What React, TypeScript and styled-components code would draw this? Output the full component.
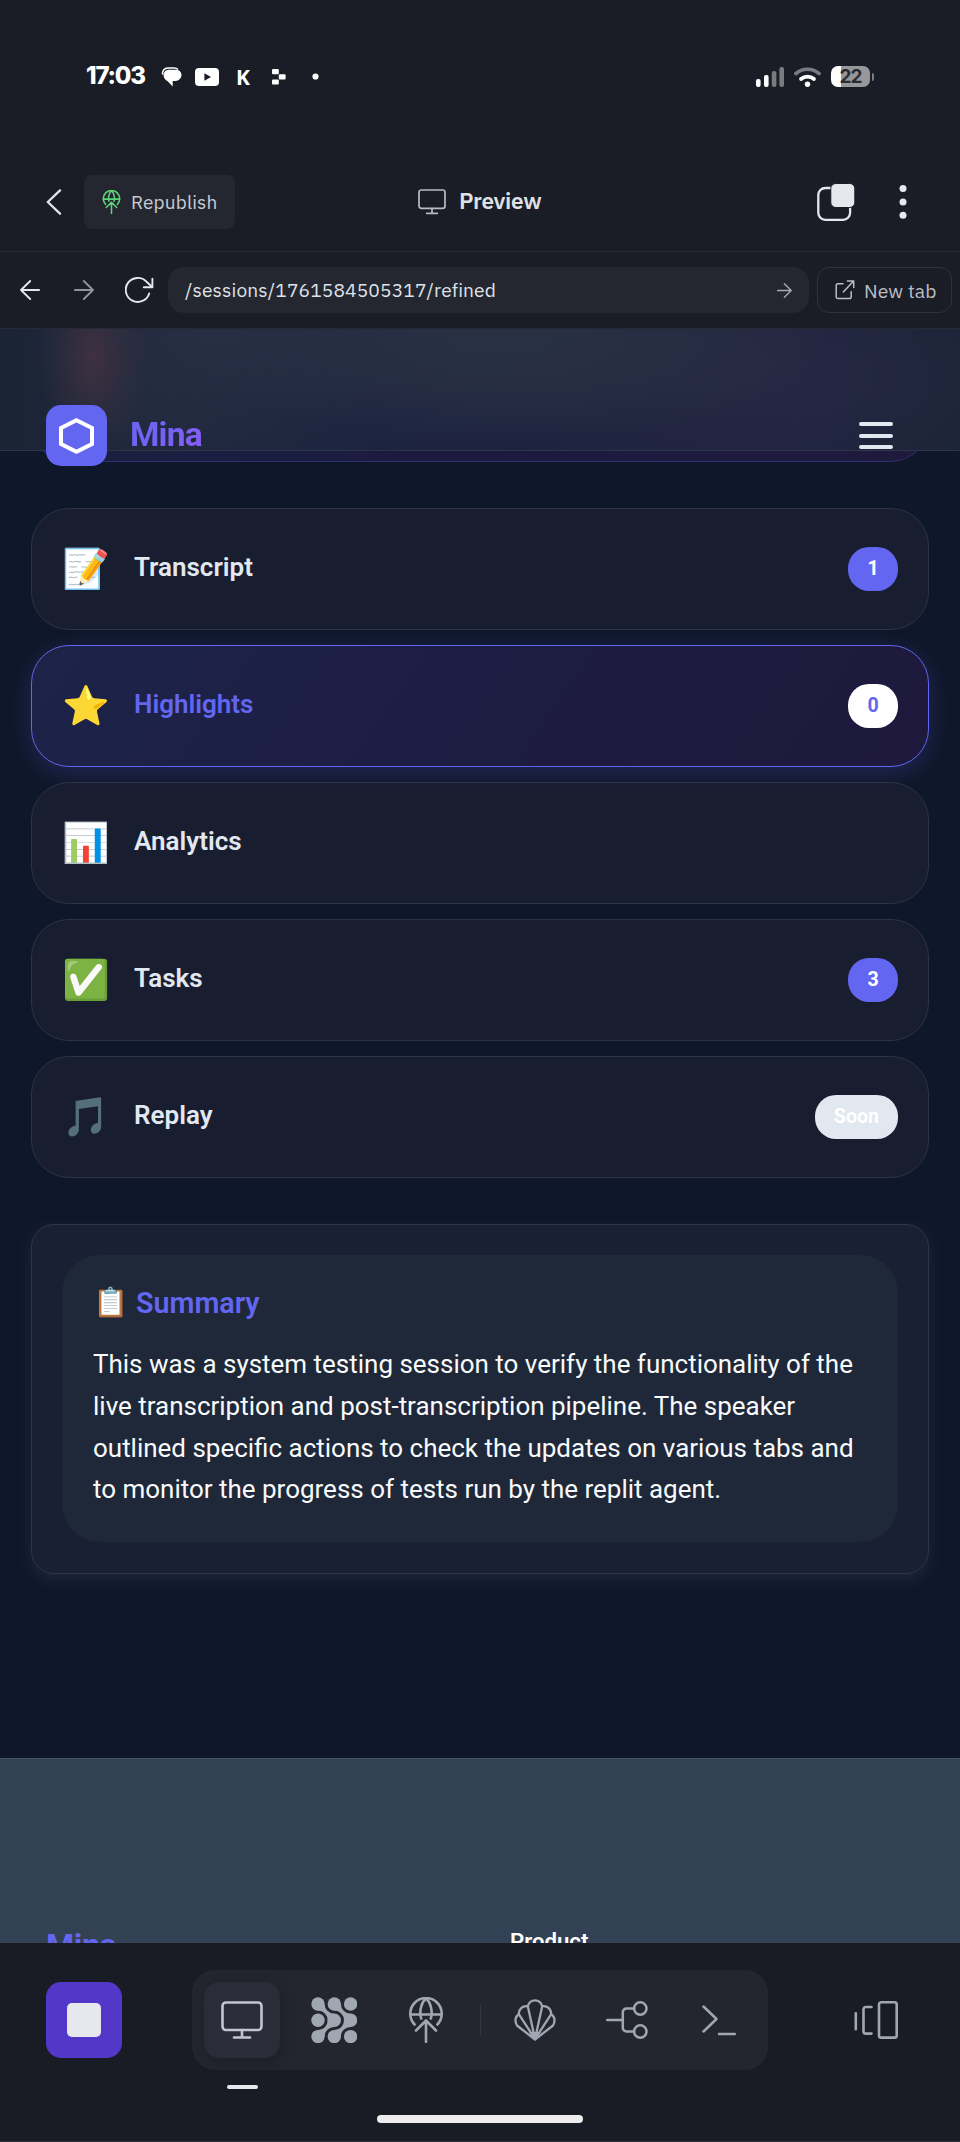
import React from 'react';
import styled, { createGlobalStyle, css } from 'styled-components';

const chromeFont = `'IBM Plex Sans', 'Noto Sans', sans-serif`;
const appFont = `Roboto, 'Noto Sans', 'Noto Color Emoji', sans-serif`;

const GlobalStyle = createGlobalStyle`
  * { box-sizing: border-box; }
  body { margin: 0; background: #1b1d26; }
  svg { display: block; flex: none; }
`;

const Screen = styled.div`
  width: 960px;
  height: 2142px;
  display: flex;
  flex-direction: column;
  overflow: hidden;
  background: #1b1d26;
  font-family: ${chromeFont};
`;

/* ---------- status bar ---------- */

const StatusBar = styled.div`
  height: 153px;
  flex: none;
  display: flex;
  align-items: center;
  justify-content: space-between;
  padding: 0 86px;
`;

const StatusSide = styled.div<{ $gap: number }>`
  display: flex;
  align-items: center;
  gap: ${(p) => p.$gap}px;
`;

const Clock = styled.span`
  width: 67px;
  font: 800 24px/28px Inter, sans-serif;
  letter-spacing: -1.2px;
  color: #fff;
  margin-top: -1px;
`;

const NoticeSlot = styled.span`
  width: 36px;
  display: flex;
  justify-content: center;
  color: #fff;
  font: 700 21px/22px 'Noto Sans', sans-serif;
`;

const Battery = styled.span`
  width: 39px;
  height: 21px;
  border-radius: 7px;
  background: linear-gradient(90deg, #fff 10px, #98989c 10px);
  color: #2a2b30;
  font: 700 19px/22px Inter, sans-serif;
  letter-spacing: -1px;
  text-align: center;
`;

const BatteryRow = styled.span`
  display: flex;
  align-items: center;
  gap: 2px;
`;

const BatteryNub = styled.span`
  width: 2px;
  height: 8px;
  border-radius: 0 2px 2px 0;
  background: #7c7d82;
`;

/* ---------- workspace bars ---------- */

const TopBar = styled.div`
  height: 99px;
  flex: none;
  display: grid;
  grid-template-columns: 1fr auto 1fr;
  align-items: center;
  padding: 0 53px 0 46px;
  border-bottom: 1px solid #262936;
`;

const TopLeft = styled.div`
  display: flex;
  align-items: center;
  gap: 22px;
`;

const TopRight = styled.div`
  display: flex;
  align-items: center;
  justify-content: flex-end;
  gap: 44px;
`;

const RepublishButton = styled.div`
  width: 151px;
  height: 54px;
  padding-left: 18px;
  border-radius: 8px;
  background: #242730;
  display: flex;
  align-items: center;
  gap: 10px;
  color: #c8cbd3;
  font-size: 19px;
  letter-spacing: 0.15px;
`;

const PreviewTitle = styled.div`
  display: flex;
  align-items: center;
  gap: 13px;
  width: 124px;
  margin-left: 7px;
  color: #dfe1e7;
  font-size: 22.6px;
  font-weight: 600;
  line-height: 30px;
  letter-spacing: -0.3px;
  white-space: nowrap;
`;

const PreviewLabel = styled.span`
  margin-top: -3px;
`;

const AddressBar = styled.div`
  height: 77px;
  flex: none;
  display: flex;
  align-items: center;
  padding: 0 8px 0 20px;
  border-bottom: 1px solid #272937;
`;

const NavButtons = styled.div`
  width: 148px;
  display: flex;
  align-items: center;
`;

const NavButton = styled.span<{ $space: number; $color: string }>`
  margin-right: ${(p) => p.$space}px;
  color: ${(p) => p.$color};
`;

const AddressField = styled.div`
  width: 641px;
  height: 46px;
  padding: 0 17px;
  border-radius: 16px;
  background: #242730;
  display: flex;
  align-items: center;
  justify-content: space-between;
  color: #dfe2e8;
  font-size: 19.2px;
  letter-spacing: 0.13px;
`;

const AddressText = styled.span`
  margin-top: -2px;
`;

const NewTabButton = styled.div`
  width: 135px;
  height: 46px;
  margin-left: 8px;
  padding-left: 17px;
  border: 1px solid #2e303e;
  border-radius: 12px;
  display: flex;
  align-items: center;
  gap: 9px;
  color: #bbbec7;
  font-size: 19.3px;
  letter-spacing: 0.1px;
  white-space: nowrap;
`;

/* ---------- previewed page ---------- */

const Viewport = styled.div`
  position: relative;
  height: 1614px;
  flex: none;
  overflow: hidden;
  background: #0f172a;
  font-family: ${appFont};
`;

const SiteHeader = styled.header`
  position: absolute;
  z-index: 2;
  top: 0;
  left: 0;
  width: 960px;
  height: 122px;
  padding: 76px 67px 0 46px;
  display: flex;
  align-items: flex-start;
  justify-content: space-between;
  border-bottom: 1px solid #2f3548;
  background:
    radial-gradient(54px 100px at 93px 28px, rgba(68, 50, 64, 0.85), rgba(62, 48, 64, 0.42) 52%, rgba(58, 46, 64, 0) 100%),
    radial-gradient(190px 150px at 210px 0px, rgba(40, 48, 70, 0.85), rgba(40, 48, 70, 0) 100%),
    radial-gradient(330px 105px at 500px 10px, rgba(41, 49, 68, 1), rgba(40, 48, 68, 0.75) 50%, rgba(40, 48, 68, 0) 100%),
    radial-gradient(280px 130px at 770px 48px, rgba(38, 40, 67, 1), rgba(38, 40, 67, 0) 100%),
    linear-gradient(90deg, #1a2435 0, #1f283b 130px, #1d2440 380px, #1e223b 780px, #1c233c 850px, #1b2437 875px);
`;

const Brand = styled.div`
  display: flex;
  align-items: center;
  gap: 23px;
`;

const BrandTile = styled.span`
  width: 61px;
  height: 61px;
  border-radius: 15px;
  background: #6366f1;
  display: flex;
  align-items: center;
  justify-content: center;
`;

const BrandName = styled.span`
  margin-top: -2px;
  font-size: 33.6px;
  font-weight: 700;
  letter-spacing: -0.8px;
  line-height: 44px;
  background: linear-gradient(135deg, #6366f1, #8b5cf6);
  background-clip: text;
  -webkit-background-clip: text;
  color: transparent;
`;

const MenuButton = styled.span`
  width: 34px;
  height: 27px;
  margin-top: 17px;
  display: flex;
  flex-direction: column;
  justify-content: space-between;
`;

const MenuBar = styled.span`
  height: 4px;
  border-radius: 2px;
  background: #e2e8f0;
`;

const Content = styled.main`
  padding: 0 31px;
`;

const ScrolledTab = styled.div`
  height: 133px;
  border: 1px solid #312f6b;
  border-top: 0;
  border-radius: 0 0 38px 38px;
  background: linear-gradient(100deg, #1a2040, #1b1b3f 45%, #1f1a3d);
`;

const TabList = styled.nav`
  display: flex;
  flex-direction: column;
  gap: 15px;
  margin-top: 46px;
`;

const Tab = styled.div<{ $active?: boolean }>`
  height: 122px;
  padding: 0 30px;
  border: 1px solid #2d3446;
  border-radius: 38px;
  background: rgba(30, 33, 52, 0.68);
  display: flex;
  align-items: center;
  color: #e2e8f0;
  ${(p) =>
    p.$active &&
    css`
      border-color: #6366f1;
      background: linear-gradient(125deg, #1c2448 0%, #1e1e45 42%, #1d1c40 60%, #1e193d 100%);
      box-shadow: 0 6px 24px rgba(99, 102, 241, 0.22);
      color: #6366f1;
    `}
`;

const TabEmoji = styled.span`
  width: 48px;
  height: 46px;
  display: flex;
  align-items: center;
  justify-content: center;
  font: 38.4px/46px 'Noto Color Emoji', sans-serif;
`;

const TabLabel = styled.span`
  flex: 1;
  margin-left: 24px;
  font-size: 26px;
  font-weight: 600;
  line-height: 42px;
  padding-bottom: 5px;
`;

const Badge = styled.span<{ $tone?: 'light' | 'muted' }>`
  min-width: 50px;
  height: 44px;
  padding: 0 19px;
  border-radius: 21px;
  text-align: center;
  font-size: 19.6px;
  font-weight: 700;
  line-height: 43px;
  background: ${(p) => (p.$tone === 'light' ? '#fff' : p.$tone === 'muted' ? '#e2e8f0' : '#6366f1')};
  color: ${(p) => (p.$tone === 'light' ? '#6366f1' : '#fff')};
`;

const SummaryCard = styled.section`
  margin-top: 46px;
  height: 350px;
  padding: 30px;
  border: 1px solid #2d3547;
  border-radius: 23px;
  background: #1a2033;
  box-shadow: 0 6px 16px rgba(51, 60, 88, 0.42);
`;

const SummaryBody = styled.div`
  height: 287px;
  padding: 26px 31px 0;
  border-radius: 38px;
  background: #1f2838;
`;

const SummaryTitle = styled.h3`
  margin: 0;
  height: 44px;
  display: flex;
  align-items: center;
  gap: 8px;
  color: #6366f1;
  font-size: 28.7px;
  font-weight: 600;
  line-height: 44px;
`;

const TitleEmoji = styled.span`
  width: 35px;
  text-align: center;
  font: 28.5px/36px 'Noto Color Emoji', sans-serif;
`;

const SummaryText = styled.p`
  margin: 19px 0 0;
  color: #f8fafc;
  font-size: 25.97px;
  line-height: 41.8px;
  white-space: nowrap;
`;

const Footer = styled.footer`
  height: 185px;
  margin-top: 184px;
  padding: 164px 46px 0;
  display: grid;
  grid-template-columns: 464px 1fr;
  border-top: 1px solid #45536a;
  background: #334155;
`;

const FooterBrand = styled.div`
  color: #6366f1;
  font-size: 32px;
  font-weight: 700;
  line-height: 44px;
  letter-spacing: -0.3px;
`;

const FooterHeading = styled.div`
  margin-top: 1px;
  color: #fff;
  font-size: 22.2px;
  font-weight: 600;
  line-height: 34px;
`;

/* ---------- bottom dock ---------- */

const Dock = styled.div`
  flex: 1;
  display: flex;
  flex-direction: column;
  padding-top: 27px;
  border-bottom: 1px solid #30323a;
  background: #1a1c25;
`;

const DockRow = styled.div`
  height: 100px;
  flex: none;
  display: flex;
  align-items: center;
  padding: 0 62px 0 46px;
`;

const StopButton = styled.div`
  width: 76px;
  height: 76px;
  border-radius: 15px;
  background: #5237c9;
  display: flex;
  align-items: center;
  justify-content: center;
`;

const StopSquare = styled.span`
  width: 34px;
  height: 34px;
  border-radius: 5px;
  background: #e6e8ee;
`;

const ToolGroup = styled.div`
  width: 576px;
  height: 100px;
  margin-left: 70px;
  margin-right: auto;
  padding: 0 11px 0 12px;
  border-radius: 23px;
  background: #23262f;
  display: flex;
  align-items: center;
  gap: 16px;
  color: #a1a7b1;
`;

const Tool = styled.div<{ $active?: boolean }>`
  width: 76px;
  height: 76px;
  flex: none;
  border-radius: 15px;
  display: flex;
  align-items: center;
  justify-content: center;
  ${(p) =>
    p.$active &&
    css`
      background: #2a2c38;
      color: #c2c6cf;
      box-shadow: 2px 5px 14px rgba(15, 17, 28, 0.35);
    `}
`;

const ToolDivider = styled.span`
  width: 1px;
  height: 30px;
  background: #343744;
`;

const ActiveMark = styled.span`
  width: 31px;
  height: 4px;
  flex: none;
  margin: 15px 0 0 227px;
  border-radius: 2px;
  background: #e6e8ee;
`;

const HomeIndicator = styled.span`
  width: 206px;
  height: 8px;
  flex: none;
  margin: 26px auto 0;
  border-radius: 4px;
  background: #ededed;
`;

/* ---------- icons ---------- */

const line = {
  fill: 'none',
  stroke: 'currentColor',
  strokeLinecap: 'round' as const,
  strokeLinejoin: 'round' as const,
};

const ChatIcon = () => (
  <svg width="21" height="20" viewBox="0 0 21 20">
    <path d="M1.600 7.600C.9 4 3.400 1 6.800 1h6.400c1.700 0 2.800.5 3.800 1.500" fill="none" stroke="#fff" strokeWidth="1.500" />
    <path d="M8.200 2.800h6.600c3.300 0 5.700 2.200 5.700 5.300s-2.600 5.900-5.900 5.900h-2.900v5.500L6.400 14C4 12.800 2.600 11 2.600 8.100c0-3.100 2.200-5.300 5.600-5.300z" fill="#fff" />
  </svg>
);

const VideoIcon = () => (
  <svg width="24" height="18" viewBox="0 0 24 18">
    <rect width="24" height="18" rx="4" fill="#fff" />
    <path d="M9.400 5.200v7.600l6.600-3.800z" fill="#1b1d26" />
  </svg>
);

const BlocksIcon = () => (
  <svg width="14" height="16" viewBox="0 0 14 16" fill="#fff">
    <rect x="0" y="0" width="6.800" height="5.200" rx="1" />
    <rect x="6.800" y="5.200" width="6.800" height="5.200" rx="1" />
    <rect x="0" y="10.400" width="6.800" height="5.200" rx="1" />
  </svg>
);

const DotIcon = () => (
  <svg width="7" height="7" viewBox="0 0 7 7">
    <circle cx="3.500" cy="3.500" r="3.100" fill="#fff" />
  </svg>
);

const SignalIcon = () => (
  <svg width="28" height="20" viewBox="0 0 28 20">
    <rect x="0" y="12" width="4.600" height="8" rx="2" fill="#fff" />
    <rect x="8" y="8" width="4.600" height="12" rx="2" fill="#fff" />
    <rect x="15.800" y="4" width="4.600" height="16" rx="2" fill="#7a7b80" />
    <rect x="23.400" y="0" width="4.600" height="20" rx="2" fill="#7a7b80" />
  </svg>
);

const WifiIcon = () => (
  <svg width="27" height="20" viewBox="0 0 27 20" fill="none" strokeLinecap="round">
    <path d="M1.900 6.600C8.200.7 18.800.7 25.100 6.600" stroke="#7a7b80" strokeWidth="3.600" />
    <path d="M7 12c3.700-3.100 9.300-3.100 13 0" stroke="#fff" strokeWidth="3.700" />
    <circle cx="13.500" cy="17.200" r="2.700" fill="#fff" />
  </svg>
);

const ChevronLeft = () => (
  <svg width="16" height="26" viewBox="0 0 16 26" {...line} stroke="#dfe2e9" strokeWidth="2.400">
    <path d="M14 1.400L1.800 13 14 24.600" />
  </svg>
);

const PublishIcon = ({ width, height, weight }: { width: number; height: number; weight: number }) => (
  <svg width={width} height={height} viewBox="0 0 34 46" {...line} strokeWidth={weight}>
    <path d="M5.600 27.500A15.700 15.700 0 1 1 28.400 27.500" />
    <path d="M1.500 17.500h31" />
    <path d="M12.200 21.500C10.200 15 11.800 6 17 1.300c5.200 4.700 6.800 13.700 4.800 20.200" />
    <path d="M17 45V23.500M7 33.500l10-10 10 10" />
  </svg>
);

const MonitorIcon = ({ width, weight }: { width: number; weight: number }) => (
  <svg width={width} height={(width * 38) / 42} viewBox="0 0 42 38" {...line} strokeWidth={weight}>
    <rect x="1.500" y="1.500" width="39" height="27.500" rx="3.500" />
    <path d="M21 29v7.500M13 36.500h16" />
  </svg>
);

const TabsIcon = () => (
  <svg width="38" height="38" viewBox="0 0 38 38">
    <rect x="1.300" y="5" width="31.800" height="31.800" rx="7" fill="none" stroke="#e6e8ee" strokeWidth="2.300" />
    <rect x="13.800" y="0.500" width="24" height="24" rx="5" fill="#e6e8ee" stroke="#1b1d26" strokeWidth="1" />
  </svg>
);

const MoreIcon = () => (
  <svg width="8" height="36" viewBox="0 0 8 36" fill="#e6e8ee">
    <circle cx="4" cy="4.500" r="3.500" />
    <circle cx="4" cy="18" r="3.500" />
    <circle cx="4" cy="31.300" r="3.500" />
  </svg>
);

const ArrowIcon = ({ size, flip }: { size: number; flip?: boolean }) => (
  <svg width={size} height={size} viewBox="0 0 20 20" {...line} strokeWidth="1.800">
    <path d={flip ? 'M19.200 10H1M10.200 1L1 10l9.200 9' : 'M.8 10H19M9.800 1L19 10l-9.200 9'} />
  </svg>
);

const ReloadIcon = () => (
  <svg width="29" height="26" viewBox="0 0 29 26" {...line} strokeWidth="1.900">
    <path d="M24.200 16.500A12 12 0 1 1 21.500 4.700L27 9.800" />
    <path d="M27.400 1.800v8.500h-8.600" />
  </svg>
);

const ExternalIcon = () => (
  <svg width="20" height="20" viewBox="0 0 20 20" {...line} strokeWidth="1.500">
    <path d="M8 3.800H3A1.800 1.800 0 0 0 1.200 5.600v11.200A1.800 1.800 0 0 0 3 18.600h11.400a1.800 1.800 0 0 0 1.800-1.800v-5" />
    <path d="M12.400 1h6.300v6.400M18.400 1.300L8.300 12" />
  </svg>
);

const HexagonIcon = () => (
  <svg width="35" height="36" viewBox="0 0 35 36">
    <path d="M17.500 2.200L33 10v16l-15.500 7.800L2 26V10z" fill="none" stroke="#fff" strokeWidth="4" />
  </svg>
);

const AgentIcon = () => {
  const stops = [7, 23.3, 39.6];
  const strands = (
    <>
      <path d="M13.600 7A9.700 9.700 0 0 0 23.300 16.700L16.700 23.300A9.700 9.700 0 0 0 7 13.600z" />
      <path d="M13.600 39.600A9.700 9.700 0 0 1 23.300 29.900L16.700 23.300A9.700 9.700 0 0 1 7 33z" />
    </>
  );
  return (
    <svg width="46.600" height="46.600" viewBox="0 0 46.600 46.600" fill="currentColor">
      {stops.map((x) => stops.map((y) => <circle key={`${x}-${y}`} cx={x} cy={y} r="6.700" />))}
      {strands}
      <g transform="translate(16.300 0)">{strands}</g>
    </svg>
  );
};

const ShellIcon = () => (
  <svg width="42" height="42" viewBox="0 0 42 42" {...line} strokeWidth="2.300">
    <path d="M21 40.500L3 26.500C.6 22.500 1 17.500 4.800 15.200 4.500 10.500 8.500 6.300 13.800 7.200 16 -.7 26 -.7 28.200 7.200c5.300-.9 9.300 3.300 9 8 3.800 2.300 4.200 7.300 1.800 11.300z" />
    <path d="M21 40L4.800 15.200M21 40L13.800 7.200M21 40l7.200-32.800M21 40l16.200-24.800" />
    <path d="M21 41l-6-8h12z" fill="currentColor" stroke="none" />
  </svg>
);

const BranchIcon = () => (
  <svg width="42" height="38" viewBox="0 0 42 38" {...line} strokeWidth="2.500">
    <path d="M1.200 19h15.600M28 7.500h-7.500a3.700 3.700 0 0 0-3.700 3.700v15.600a3.700 3.700 0 0 0 3.700 3.700H28" />
    <circle cx="34.300" cy="7.500" r="6.200" />
    <circle cx="34.300" cy="30.500" r="6.200" />
  </svg>
);

const TerminalIcon = () => (
  <svg width="34" height="31" viewBox="0 0 34 31" {...line} strokeWidth="2.500">
    <path d="M1.500 1.500L14.500 14 1.500 26.500M17 29h15.800" />
  </svg>
);

const CarouselIcon = () => (
  <svg width="44" height="38" viewBox="0 0 44 38" {...line} stroke="#a1a7b1" strokeWidth="2.600">
    <rect x="25" y="1.300" width="17.700" height="35.300" rx="2.200" />
    <path d="M17.500 6H11.800a2.300 2.300 0 0 0-2.300 2.300v22a2.300 2.300 0 0 0 2.300 2.300h5.700M1.800 12.300v16" />
  </svg>
);

/* ---------- data ---------- */

type TabItem = {
  emoji: string;
  label: string;
  badge?: string;
  tone?: 'light' | 'muted';
  active?: boolean;
};

const tabs: TabItem[] = [
  { emoji: '📝', label: 'Transcript', badge: '1' },
  { emoji: '⭐', label: 'Highlights', badge: '0', tone: 'light', active: true },
  { emoji: '📊', label: 'Analytics' },
  { emoji: '✅', label: 'Tasks', badge: '3' },
  { emoji: '🎵', label: 'Replay', badge: 'Soon', tone: 'muted' },
];

export default function App() {
  return (
    <Screen>
      <GlobalStyle />
      <StatusBar>
        <StatusSide $gap={0}>
          <Clock>17:03</Clock>
          <NoticeSlot><ChatIcon /></NoticeSlot>
          <NoticeSlot><VideoIcon /></NoticeSlot>
          <NoticeSlot>K</NoticeSlot>
          <NoticeSlot><BlocksIcon /></NoticeSlot>
          <NoticeSlot><DotIcon /></NoticeSlot>
        </StatusSide>
        <StatusSide $gap={10}>
          <SignalIcon />
          <WifiIcon />
          <BatteryRow>
            <Battery>22</Battery>
            <BatteryNub />
          </BatteryRow>
        </StatusSide>
      </StatusBar>

      <TopBar>
        <TopLeft>
          <ChevronLeft />
          <RepublishButton>
            <NavButton $space={0} $color="#5fd47a"><PublishIcon width={19} height={24} weight={2.9} /></NavButton>
            Republish
          </RepublishButton>
        </TopLeft>
        <PreviewTitle>
          <NavButton $space={0} $color="#b6bac3"><MonitorIcon width={28} weight={2.6} /></NavButton>
          <PreviewLabel>Preview</PreviewLabel>
        </PreviewTitle>
        <TopRight>
          <TabsIcon />
          <MoreIcon />
        </TopRight>
      </TopBar>

      <AddressBar>
        <NavButtons>
          <NavButton $space={34} $color="#e6e8ee"><ArrowIcon size={20} flip /></NavButton>
          <NavButton $space={31} $color="#8f949f"><ArrowIcon size={20} /></NavButton>
          <NavButton $space={0} $color="#e6e8ee"><ReloadIcon /></NavButton>
        </NavButtons>
        <AddressField>
          <AddressText>/sessions/1761584505317/refined</AddressText>
          <NavButton $space={0} $color="#a8acb6"><ArrowIcon size={15} /></NavButton>
        </AddressField>
        <NewTabButton>
          <ExternalIcon />
          New tab
        </NewTabButton>
      </AddressBar>

      <Viewport>
        <SiteHeader>
          <Brand>
            <BrandTile><HexagonIcon /></BrandTile>
            <BrandName>Mina</BrandName>
          </Brand>
          <MenuButton>
            <MenuBar />
            <MenuBar />
            <MenuBar />
          </MenuButton>
        </SiteHeader>
        <Content>
          <ScrolledTab />
          <TabList>
            {tabs.map((tab) => (
              <Tab key={tab.label} $active={tab.active}>
                <TabEmoji>{tab.emoji}</TabEmoji>
                <TabLabel>{tab.label}</TabLabel>
                {tab.badge && <Badge $tone={tab.tone}>{tab.badge}</Badge>}
              </Tab>
            ))}
          </TabList>
          <SummaryCard>
            <SummaryBody>
              <SummaryTitle>
                <TitleEmoji>📋</TitleEmoji>
                Summary
              </SummaryTitle>
              <SummaryText>
                This was a system testing session to verify the functionality of the
                <br />
                live transcription and post-transcription pipeline. The speaker
                <br />
                outlined specific actions to check the updates on various tabs and
                <br />
                to monitor the progress of tests run by the replit agent.
              </SummaryText>
            </SummaryBody>
          </SummaryCard>
        </Content>
        <Footer>
          <FooterBrand>Mina</FooterBrand>
          <FooterHeading>Product</FooterHeading>
        </Footer>
      </Viewport>

      <Dock>
        <DockRow>
          <StopButton><StopSquare /></StopButton>
          <ToolGroup>
            <Tool $active><MonitorIcon width={42} weight={2.6} /></Tool>
            <Tool><AgentIcon /></Tool>
            <Tool><PublishIcon width={34} height={46} weight={2.6} /></Tool>
            <ToolDivider />
            <Tool><ShellIcon /></Tool>
            <Tool><BranchIcon /></Tool>
            <Tool><TerminalIcon /></Tool>
          </ToolGroup>
          <CarouselIcon />
        </DockRow>
        <ActiveMark />
        <HomeIndicator />
      </Dock>
    </Screen>
  );
}
